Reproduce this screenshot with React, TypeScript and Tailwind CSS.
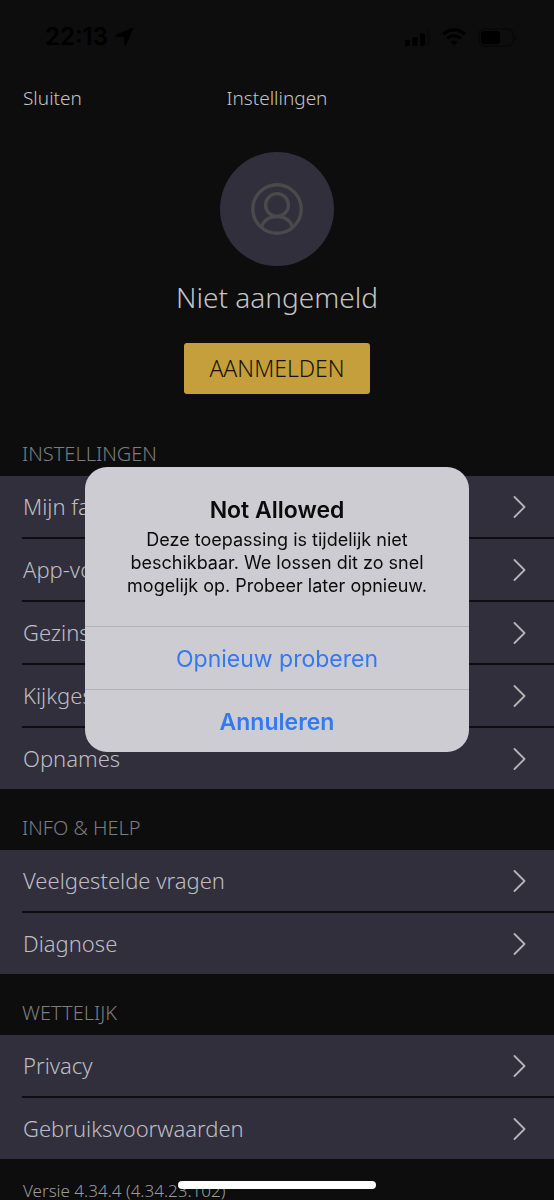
const sections = [
  {
    title: "INSTELLINGEN",
    items: ["Mijn favorieten", "App-voorkeuren", "Gezinsinstellingen", "Kijkgeschiedenis", "Opnames"],
  },
  { title: "INFO & HELP", items: ["Veelgestelde vragen", "Diagnose"] },
  { title: "WETTELIJK", items: ["Privacy", "Gebruiksvoorwaarden"] },
];

function StatusBar() {
  return (
    <div className="flex h-[74px] items-center justify-between pr-[37px] pl-[45px] text-black">
      <div className="flex items-center gap-1.5 font-['Inter',sans-serif] text-2xl font-semibold">
        <span>22:13</span>
        <svg width="20" height="20" viewBox="0 0 20 20" fill="currentColor" aria-hidden="true">
          <path d="M18.2 .8C19 .5 19.5 1 19.2 1.8L12 18.2c-.4.9-1.6.8-1.7-.2L10 10.2 2 9.8C1 9.7.9 8.5 1.8 8.1Z" />
        </svg>
      </div>
      <div className="flex items-center gap-3">
        <svg width="26" height="17" viewBox="0 0 26 17" fill="currentColor" aria-hidden="true">
          <rect x="1" y="11" width="5" height="6" rx="1.2" />
          <rect x="8.5" y="8" width="5" height="9" rx="1.2" />
          <rect x="16" y="4.5" width="5" height="12.5" rx="1.2" />
          <rect x="23" y="0" width="3" height="17" rx="1.2" opacity=".2" />
        </svg>
        <svg width="24" height="18" viewBox="0 0 24 18" fill="none" stroke="currentColor" strokeWidth="3.2" aria-hidden="true">
          <path d="M1.2 6.2a15.5 15.5 0 0 1 21.6 0" />
          <path d="M5.2 10.6a9.8 9.8 0 0 1 13.6 0" />
          <path d="M12 17.5 8.6 14.2a5 5 0 0 1 6.8 0Z" fill="currentColor" stroke="none" />
        </svg>
        <svg width="39" height="19" viewBox="0 0 39 19" aria-hidden="true">
          <rect x="1" y="1" width="34" height="17" rx="5" fill="none" stroke="#000" strokeOpacity=".4" strokeWidth="1.5" />
          <rect x="3" y="3" width="19" height="13" rx="3" />
          <path d="M36.5 6.5c2.3 1 2.3 5 0 6Z" fillOpacity=".4" />
        </svg>
      </div>
    </div>
  );
}

function Chevron() {
  return (
    <svg
      className="shrink-0"
      width="13"
      height="22"
      viewBox="0 0 13 22"
      fill="none"
      stroke="#b4b4bb"
      strokeWidth="1.8"
      strokeLinecap="round"
      strokeLinejoin="round"
      aria-hidden="true"
    >
      <path d="M1.5 1 11.5 11 1.5 21" />
    </svg>
  );
}

function Section({ title, items }: { title: string; items: string[] }) {
  return (
    <section>
      <h2 className="flex h-[61px] items-end px-[22px] pb-[7px] text-xl leading-[30px] text-[#7c7c81]">{title}</h2>
      <ul className="bg-[#302f3b]">
        {items.map((item, i) => (
          <li key={item}>
            {i > 0 && <div className="ml-[22px] h-[2px] bg-[#0d0d12]" />}
            <button
              type="button"
              className="flex h-[61px] w-full items-center justify-between pr-7 pl-[23px] text-left text-[22px] leading-8 text-[#bebdc4]"
            >
              <span className="pb-[2px]">{item}</span>
              <Chevron />
            </button>
          </li>
        ))}
      </ul>
    </section>
  );
}

function Alert() {
  return (
    <div className="fixed inset-0 flex items-center justify-center pt-[19px]">
      <div
        role="alertdialog"
        aria-modal="true"
        aria-labelledby="alert-title"
        aria-describedby="alert-text"
        className="w-[384px] max-w-full overflow-hidden rounded-[22px] bg-[#cdccd2] text-center font-['Inter',sans-serif] font-normal text-[#0b0b0d]"
      >
        <div className="px-8 pt-[26px] pb-[29px]">
          <h3 id="alert-title" className="text-[23px] leading-[35px] font-semibold">
            Not Allowed
          </h3>
          <p id="alert-text" className="text-[18px] leading-[23px]">
            Deze toepassing is tijdelijk niet
            <br />
            beschikbaar. We lossen dit zo snel
            <br />
            mogelijk op. Probeer later opnieuw.
          </p>
        </div>
        <button type="button" className="block h-[63px] w-full border-t border-[#b3b2b9] pt-[2px] text-[23px] text-[#3479f0]">
          Opnieuw proberen
        </button>
        <button type="button" className="block h-[63px] w-full border-t border-[#b3b2b9] pt-[2px] text-[23px] font-semibold text-[#3479f0]">
          Annuleren
        </button>
      </div>
    </div>
  );
}

export default function App() {
  return (
    <div className="h-screen overflow-hidden bg-[#0d0d0d] font-['Noto_Sans',sans-serif] font-light">
      <StatusBar />
      <header className="grid h-12 grid-cols-3 items-center px-[23px] text-[19px] text-[#c4c4c4]">
        <button type="button" className="justify-self-start">
          Sluiten
        </button>
        <h1 className="text-center">Instellingen</h1>
      </header>
      <div className="flex flex-col items-center pt-[30px]">
        <div className="flex size-[114px] items-center justify-center rounded-full bg-[#302f3b]">
          <svg width="52" height="52" viewBox="0 0 52 52" fill="none" stroke="#4a4a4d" strokeWidth="3.4" aria-hidden="true">
            <circle cx="26" cy="26" r="24.2" />
            <circle cx="26" cy="22" r="11.4" />
            <path d="M10.5 44C13 37 19 33.5 26 33.5S39 37 41.5 44" />
          </svg>
        </div>
        <p className="mt-3 text-[28px] leading-[38px] text-[#c4c4c4]">Niet aangemeld</p>
        <button type="button" className="mt-[27px] h-[51px] rounded-[3px] bg-[#c49f3b] px-[25px] text-[23px] text-[#17130a]">
          AANMELDEN
        </button>
      </div>
      <div className="pt-[21px]">
        {sections.map((s) => (
          <Section key={s.title} title={s.title} items={s.items} />
        ))}
      </div>
      <p className="px-[23px] pt-5 text-[17px] leading-6 text-[#9c9ca0]">Versie 4.34.4 (4.34.23.102)</p>
      <Alert />
      <div className="fixed inset-x-0 bottom-[11px] flex justify-center">
        <div className="h-2 w-[198px] rounded-full bg-white" />
      </div>
    </div>
  );
}
